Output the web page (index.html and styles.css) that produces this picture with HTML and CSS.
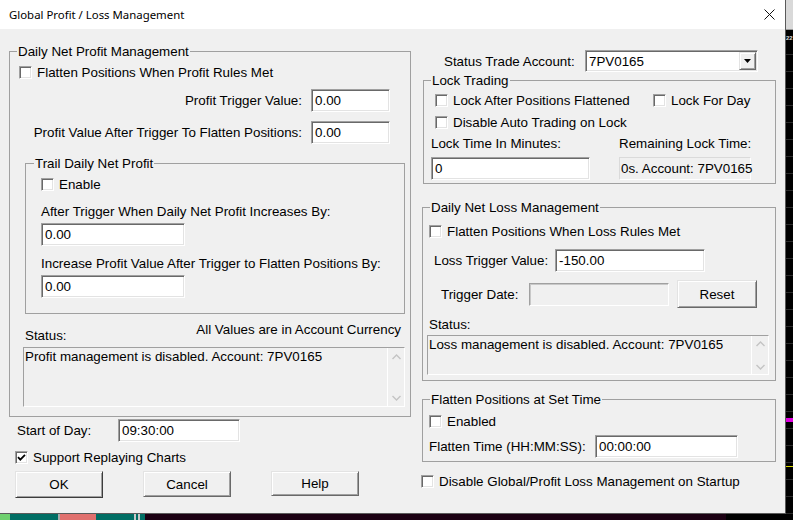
FILE: index.html
```html
<!DOCTYPE html>
<html>
<head>
<meta charset="utf-8">
<link rel="stylesheet" href="styles.css">
</head>
<body>
<div class="screen">
  <div class="top">
    <div class="dialog">
      <div class="titlebar">
        <span class="title">Global Profit / Loss Management</span>
        <svg class="close" width="11" height="11" viewBox="0 0 11 11"><path d="M0.5 0.5L10.5 10.5M10.5 0.5L0.5 10.5" stroke="#111" stroke-width="1"/></svg>
      </div>
      <div class="content">
        <div class="col-left">
          <fieldset class="group g-profit">
            <legend>Daily Net Profit Management</legend>
            <div class="cb-row r-flatten"><span class="cb"></span><span>Flatten Positions When Profit Rules Met</span></div>
            <div class="form-row r-trig"><span>Profit Trigger Value:</span><div class="edit w-profit">0.00</div></div>
            <div class="form-row r-after"><span>Profit Value After Trigger To Flatten Positions:</span><div class="edit w-profit">0.00</div></div>
            <fieldset class="group g-trail">
              <legend>Trail Daily Net Profit</legend>
              <div class="cb-row r-enable indent"><span class="cb"></span><span>Enable</span></div>
              <div class="text-line r-inc1 indent">After Trigger When Daily Net Profit Increases By:</div>
              <div class="edit w-trail r-e1 indent">0.00</div>
              <div class="text-line r-inc2 indent">Increase Profit Value After Trigger to Flatten Positions By:</div>
              <div class="edit w-trail r-e2 indent">0.00</div>
            </fieldset>
            <div class="status-head">
              <span class="status-label">Status:</span>
              <span class="currency">All Values are in Account Currency</span>
            </div>
            <div class="memo memo-profit">
              <div class="memo-text">Profit management is disabled. Account: 7PV0165</div>
              <div class="vscroll">
                <svg width="9" height="6" viewBox="0 0 9 6"><path d="M0.5 5L4.5 1L8.5 5" fill="none" stroke="#c4c4c4" stroke-width="1.4"/></svg>
                <svg width="9" height="6" viewBox="0 0 9 6"><path d="M0.5 1L4.5 5L8.5 1" fill="none" stroke="#c4c4c4" stroke-width="1.4"/></svg>
              </div>
            </div>
          </fieldset>
          <div class="sod-row">
            <span class="sod-label">Start of Day:</span>
            <div class="edit w-sod">09:30:00</div>
          </div>
          <div class="cb-row r-replay">
            <span class="cb checked"><svg width="9" height="9" viewBox="0 0 9 9"><path d="M1 4.2L3.3 6.6L8 1.8" fill="none" stroke="#000" stroke-width="1.8"/></svg></span>
            <span>Support Replaying Charts</span>
          </div>
          <div class="buttons">
            <div class="btn btn-default">OK</div>
            <div class="btn btn-cancel">Cancel</div>
            <div class="btn btn-help">Help</div>
          </div>
        </div>

        <div class="col-right">
          <div class="acct-row">
            <span class="acct-label">Status Trade Account:</span>
            <div class="combo">
              <span class="combo-text">7PV0165</span>
              <span class="combo-btn"><svg width="7" height="4" viewBox="0 0 7 4"><path d="M0 0H7L3.5 4Z" fill="#000"/></svg></span>
            </div>
          </div>

          <fieldset class="group g-lock">
            <legend>Lock Trading</legend>
            <div class="lock-row1">
              <div class="cb-row lock-a"><span class="cb"></span><span>Lock After Positions Flattened</span></div>
              <div class="cb-row"><span class="cb"></span><span>Lock For Day</span></div>
            </div>
            <div class="cb-row lock-row2"><span class="cb"></span><span>Disable Auto Trading on Lock</span></div>
            <div class="lock-labels">
              <span class="lock-l1">Lock Time In Minutes:</span>
              <span>Remaining Lock Time:</span>
            </div>
            <div class="lock-edits">
              <div class="edit w-lock">0</div>
              <div class="readonly">0s. Account: 7PV0165</div>
            </div>
          </fieldset>

          <fieldset class="group g-loss">
            <legend>Daily Net Loss Management</legend>
            <div class="cb-row loss-cb"><span class="cb"></span><span>Flatten Positions When Loss Rules Met</span></div>
            <div class="loss-trig">
              <span class="loss-label">Loss Trigger Value:</span>
              <div class="edit w-loss">-150.00</div>
            </div>
            <div class="trig-date">
              <span class="td-label">Trigger Date:</span>
              <div class="disabled-edit"></div>
              <div class="btn btn-reset">Reset</div>
            </div>
            <div class="loss-status">Status:</div>
            <div class="memo memo-loss">
              <div class="memo-text">Loss management is disabled. Account: 7PV0165</div>
              <div class="vscroll">
                <svg width="9" height="6" viewBox="0 0 9 6"><path d="M0.5 5L4.5 1L8.5 5" fill="none" stroke="#c4c4c4" stroke-width="1.4"/></svg>
                <svg width="9" height="6" viewBox="0 0 9 6"><path d="M0.5 1L4.5 5L8.5 1" fill="none" stroke="#c4c4c4" stroke-width="1.4"/></svg>
              </div>
            </div>
          </fieldset>

          <fieldset class="group g-flat">
            <legend>Flatten Positions at Set Time</legend>
            <div class="cb-row flat-cb"><span class="cb"></span><span>Enabled</span></div>
            <div class="flat-time">
              <span class="ft-label">Flatten Time (HH:MM:SS):</span>
              <div class="edit w-flat">00:00:00</div>
            </div>
          </fieldset>

          <div class="cb-row disable-row"><span class="cb"></span><span>Disable Global/Profit Loss Management on Startup</span></div>
        </div>
      </div>
    </div>
    <div class="chart-right">
      <div class="cr-head"></div>
      <div class="cr-body">
        <span class="cr-num">22</span>
        <span class="cr-magenta"></span>
        <span class="cr-yellow"></span>
      </div>
    </div>
  </div>
  <div class="chart-bottom">
    <span class="seg s-green"></span>
    <span class="seg s-teal1"></span>
    <span class="seg s-gray1"></span>
    <span class="seg s-salmon"></span>
    <span class="seg s-teal2"></span>
    <span class="seg s-light"></span>
    <span class="seg s-teal3"></span>
    <span class="seg s-light"></span>
    <span class="seg s-teal4"></span>
    <span class="seg s-dark"></span>
    <span class="seg s-black"></span>
  </div>
</div>
</body>
</html>
```
FILE: styles.css
```css
* { box-sizing: border-box; }
html, body { margin: 0; padding: 0; }
body {
  width: 793px;
  height: 520px;
  overflow: hidden;
  background: #000;
  font-family: "Liberation Sans", Arial, sans-serif;
  font-size: 13.36px;
  line-height: 15px;
  color: #000;
}
.screen { width: 793px; height: 520px; display: flex; flex-direction: column; }
.top { display: flex; height: 514px; }

.dialog {
  width: 786px;
  height: 514px;
  background: #f0f0f0;
  border-right: 1px solid #5a5a5a;
  border-bottom: 1px solid #5a5a5a;
  display: flex;
  flex-direction: column;
}
.titlebar {
  height: 29px;
  background: #fff;
  display: flex;
  align-items: center;
  justify-content: space-between;
  padding: 0 10px 1px 9px;
  flex: none;
}
.title {
  font-family: "Noto Sans", "Open Sans", sans-serif;
  font-size: 11.4px;
  color: #000;
}
.close { display: block; }

.content { display: flex; padding-left: 9px; flex: 1; }
.col-left { width: 402px; display: flex; flex-direction: column; }
.col-right { width: 356px; margin-left: 10px; display: flex; flex-direction: column; }

/* group boxes */
.group {
  margin: 0;
  padding: 0;
  min-width: 0;
  border: 1px solid #a0a0a0;
  display: flex;
  flex-direction: column;
}
.group > legend {
  padding: 0 1px;
  margin-left: 7px;
  line-height: 15px;
  height: 15px;
}

/* common controls */
.cb-row { display: flex; align-items: center; height: 16px; gap: 5px; white-space: nowrap; }
.cb {
  width: 13px;
  height: 13px;
  flex: none;
  background: #fff;
  border: 1px solid;
  border-color: #a0a0a0 #fff #fff #a0a0a0;
  box-shadow: inset 1px 1px #696969, inset -1px -1px #e3e3e3;
  display: flex;
  align-items: center;
  justify-content: center;
}
.cb svg { display: block; }
.edit {
  height: 23px;
  background: #fff;
  border: 1px solid;
  border-color: #a0a0a0 #fff #fff #a0a0a0;
  box-shadow: inset 1px 1px #696969, inset -1px -1px #e3e3e3;
  padding: 0 2px 0 3px;
  display: flex;
  align-items: center;
  white-space: nowrap;
  flex: none;
}
.btn {
  background: #f0f0f0;
  border: 1px solid;
  border-color: #e3e3e3 #696969 #696969 #e3e3e3;
  box-shadow: inset 1px 1px #fff, inset -1px -1px #a0a0a0;
  display: flex;
  align-items: center;
  justify-content: center;
  flex: none;
}
.memo {
  display: flex;
  background: #f0f0f0;
  border: 1px solid;
  border-color: #a0a0a0 #fff #fff #a0a0a0;
}
.memo-text { flex: 1; padding: 1px 0 0 1px; white-space: nowrap; }
.vscroll {
  width: 17px;
  flex: none;
  border-left: 1px solid #fff;
  display: flex;
  flex-direction: column;
  justify-content: space-between;
  align-items: center;
  padding: 6px 0 5px;
}
.vscroll svg { display: block; }

/* left column */
.g-profit { margin-top: 15px; width: 402px; padding-bottom: 9px; }
.r-flatten { margin: 5px 0 0 9px; }
.form-row { display: flex; justify-content: flex-end; align-items: center; gap: 9px; padding-right: 20px; white-space: nowrap; }
.r-trig { margin-top: 9px; }
.r-after { margin-top: 9px; }
.w-profit { width: 79px; }

.g-trail { margin: 12px 0 0 15px; width: 380px; padding: 0 0 15px 0; }
.g-trail > legend { margin-left: 8px; }
.indent { margin-left: 15px; }
.r-enable { margin-top: 5px; }
.text-line { height: 15px; white-space: nowrap; }
.r-inc1 { margin-top: 12px; }
.r-e1 { margin-top: 4px; }
.r-inc2 { margin-top: 10px; }
.r-e2 { margin-top: 4px; }
.w-trail { width: 144px; }

.status-head { display: flex; justify-content: space-between; height: 21px; margin-top: 8px; padding: 0 9px 0 15px; }
.status-label { align-self: flex-end; }
.currency { align-self: flex-start; }
.memo-profit { margin: 4px 0 0 13px; width: 382px; height: 60px; }

.sod-row { display: flex; align-items: center; margin: 2px 0 0 8px; }
.sod-label { width: 101px; }
.w-sod { width: 122px; }
.r-replay { margin: 7px 0 0 6px; }
.buttons { display: flex; gap: 40px; align-items: flex-start; margin: 6px 0 0 6px; }
.btn-default { width: 88px; height: 27px; border-color: #e3e3e3 #3c3c3c #3c3c3c #e3e3e3; }
.btn-cancel { width: 88px; height: 26px; }
.btn-help { width: 88px; height: 25px; }

/* right column */
.acct-row { display: flex; align-items: center; height: 22px; margin-top: 21px; }
.acct-label { width: 141px; margin-left: 23px; white-space: nowrap; }
.combo {
  width: 173px;
  height: 22px;
  background: #fff;
  border: 1px solid;
  border-color: #a0a0a0 #fff #fff #a0a0a0;
  box-shadow: inset 1px 1px #696969, inset -1px -1px #e3e3e3;
  display: flex;
  align-items: center;
  justify-content: space-between;
  padding: 1px 1px 1px 3px;
}
.combo-btn {
  width: 17px;
  height: 18px;
  background: #f0f0f0;
  border: 1px solid;
  border-color: #e3e3e3 #696969 #696969 #e3e3e3;
  box-shadow: inset 1px 1px #fff, inset -1px -1px #a0a0a0;
  display: flex;
  align-items: center;
  justify-content: center;
}
.combo-btn svg { display: block; }

.g-lock { margin: 1px 0 0 2px; width: 353px; padding: 0 0 3px 0; }
.lock-row1 { display: flex; margin: 4px 0 0 11px; }
.lock-a { width: 218px; }
.lock-row2 { margin: 6px 0 0 11px; }
.lock-labels { display: flex; margin: 6px 0 0 7px; height: 15px; white-space: nowrap; }
.lock-l1 { width: 188px; }
.lock-edits { display: flex; margin: 6px 0 0 7px; gap: 29px; }
.w-lock { width: 159px; }
.readonly {
  width: 132px;
  height: 23px;
  background: #f0f0f0;
  border: 1px solid #dadada;
  border-right-color: #fff;
  border-bottom-color: #fff;
  display: flex;
  align-items: center;
  padding-left: 1px;
  white-space: nowrap;
}

.g-loss { margin: 16px 0 0 1px; width: 354px; padding: 0 0 5px 0; }
.loss-cb { margin: 8px 0 0 6px; }
.loss-trig { display: flex; align-items: center; margin: 10px 0 0 11px; }
.loss-label { width: 121px; white-space: nowrap; }
.w-loss { width: 150px; }
.trig-date { display: flex; align-items: center; height: 28px; margin: 8px 0 0 18px; }
.td-label { width: 88px; }
.disabled-edit {
  width: 140px;
  height: 23px;
  background: #f0f0f0;
  border: 1px solid;
  border-color: #a0a0a0 #fff #fff #a0a0a0;
  box-shadow: inset 1px 1px #c8c8c8;
}
.btn-reset { width: 80px; height: 28px; margin-left: 8px; }
.loss-status { margin: 9px 0 0 6px; height: 15px; }
.memo-loss { margin: 3px 0 0 4px; width: 342px; height: 40px; }
.memo-loss .vscroll { padding: 5px 0 4px; }

.g-flat { margin: 11px 0 0 1px; width: 354px; padding: 0 0 3px 0; }
.flat-cb { margin: 6px 0 0 6px; }
.flat-time { display: flex; align-items: center; margin: 6px 0 0 6px; }
.ft-label { width: 166px; white-space: nowrap; }
.w-flat { width: 143px; }
.disable-row { margin: 11px 0 0 0; }

/* chart background */
.chart-right { flex: 1; display: flex; flex-direction: column; }
.cr-head { height: 30px; background: #d9d9d9; border-bottom: 1px solid #9a9a9a; }
.cr-body {
  flex: 1;
  position: relative;
  background: repeating-linear-gradient(to bottom, #000 0, #000 16px, #2b2b2b 16px, #2b2b2b 17px);
  background-position: 0 8px;
  overflow: hidden;
}
.cr-num { position: absolute; left: 0; top: 4px; color: #ddd; font-size: 6px; line-height: 8px; font-weight: bold; }
.cr-magenta { position: absolute; left: 0; right: 0; top: 388px; height: 4px; background: #e000e0; }
.cr-yellow { position: absolute; left: 0; right: 0; top: 436px; height: 1px; background: #d8d800; }

.chart-bottom { display: flex; flex: 1; }
.seg { display: block; height: 100%; }
.s-green { width: 10px; background: #6fd06f; }
.s-teal1 { width: 48px; background: #006e64; }
.s-gray1 { width: 2px; background: #a8a8a8; }
.s-salmon { width: 36px; background: #e0706e; }
.s-teal2 { width: 38px; background: #006e64; }
.s-light { width: 2px; background: #c8c8c8; }
.s-teal3 { width: 2px; background: #006e64; }
.s-teal4 { width: 5px; background: #006e64; }
.s-dark { width: 581px; background: #1b0012; }
.s-black { flex: 1; background: #000; }
```
